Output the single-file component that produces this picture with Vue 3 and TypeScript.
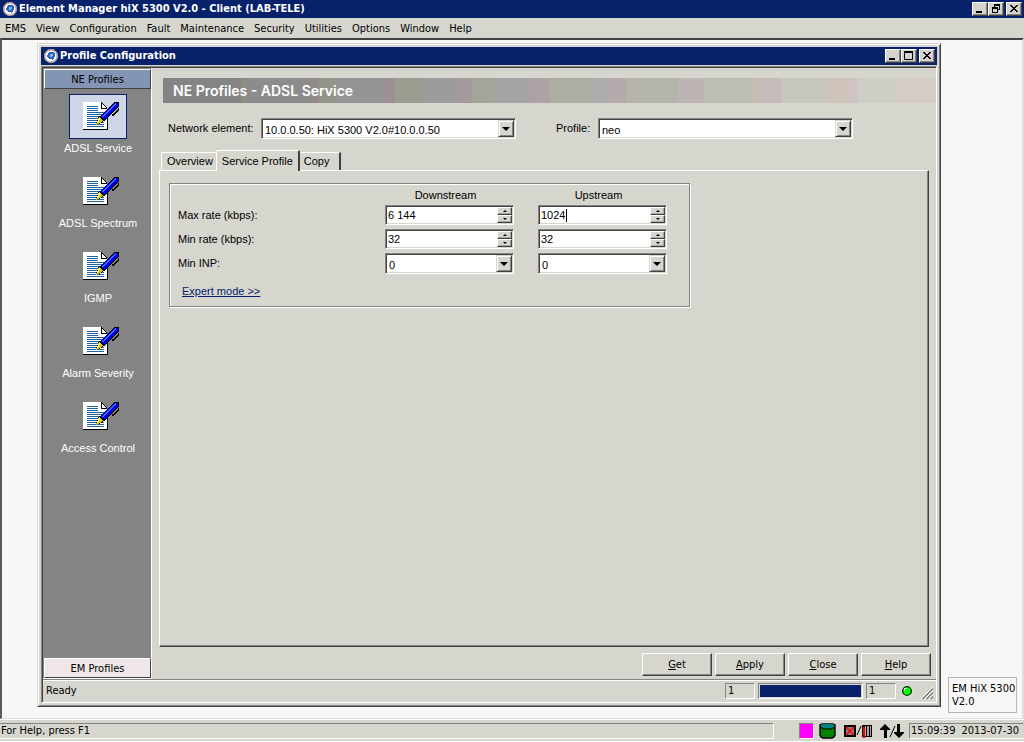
<script setup lang="ts">
import { ref } from 'vue'

interface StatusIndicator {
  low: string
  high: string
}

const menus: string[] = ['EMS', 'View', 'Configuration', 'Fault', 'Maintenance', 'Security', 'Utilities', 'Options', 'Window', 'Help']
const profiles: string[] = ['ADSL Service', 'ADSL Spectrum', 'IGMP', 'Alarm Severity', 'Access Control']
const tabs: string[] = ['Overview', 'Service Profile', 'Copy']
const actions: string[] = ['Get', 'Apply', 'Close', 'Help']
const docLines: number[] = [4, 6, 8, 10, 12, 14, 16, 18, 20, 22, 24]

const activeProfile = ref('ADSL Service')
const activeTab = ref('Service Profile')
const networkElement = ref('10.0.0.50: HiX 5300 V2.0#10.0.0.50')
const profile = ref('neo')
const maxDown = ref('6 144')
const maxUp = ref('1024')
const minDown = ref('32')
const minUp = ref('32')
const inpDown = ref('0')
const inpUp = ref('0')
const status: StatusIndicator = { low: '1', high: '1' }

function parse(text: string): number {
  return Number(text.replace(/\s/g, '')) || 0
}

function step(text: string, delta: number): string {
  return String(Math.max(0, parse(text) + delta))
}
</script>

<template>
  <div class="app">
    <header class="titlebar">
      <svg class="logo" viewBox="0 0 14 14" aria-hidden="true">
        <circle cx="7" cy="7" r="6.3" fill="#fff" stroke="#c69c84" stroke-width="1.4" />
        <circle cx="7" cy="7" r="6.3" fill="none" stroke="#9cadce" stroke-width="1.4" stroke-dasharray="2 3" />
        <path d="M5 3h5v1h1v4h-1v2h-1v1H8v-1H5V9H4V8H3V6h1V4h1z" fill="#2963bd" />
        <path d="M6 5h3v2H8v1H6z" fill="#8cb5ef" />
      </svg>
      <h1>Element Manager hiX 5300 V2.0 - Client (LAB-TELE)</h1>
      <div class="controls">
        <button type="button" aria-label="Minimize">
          <svg viewBox="0 0 12 10"><path d="M2 7h6v2H2z" /></svg>
        </button>
        <button type="button" aria-label="Restore">
          <svg viewBox="0 0 12 10"><path d="M4 0h6v6H8V5h1V2H5v1H4zM2 3h6v6H2zM3 5v3h4V5z" fill-rule="evenodd" /></svg>
        </button>
        <button type="button" class="close" aria-label="Close">
          <svg viewBox="0 0 12 10"><path d="M2 1h2v1h1v1h2V2h1V1h2v1H9v1H8v1H7v1h1v1h1v1h1v1H8V7H7V6H5v1H4v1H2V7h1V6h1V5h1V4H4V3H3V2H2z" /></svg>
        </button>
      </div>
    </header>

    <nav class="menubar">
      <button v-for="menu in menus" :key="menu" type="button">{{ menu }}</button>
    </nav>

    <main class="desktop">
      <section class="window">
        <header class="titlebar">
          <svg class="logo" viewBox="0 0 14 14" aria-hidden="true">
            <circle cx="7" cy="7" r="6.3" fill="#fff" stroke="#c69c84" stroke-width="1.4" />
            <circle cx="7" cy="7" r="6.3" fill="none" stroke="#9cadce" stroke-width="1.4" stroke-dasharray="2 3" />
            <path d="M5 3h5v1h1v4h-1v2h-1v1H8v-1H5V9H4V8H3V6h1V4h1z" fill="#2963bd" />
            <path d="M6 5h3v2H8v1H6z" fill="#8cb5ef" />
          </svg>
          <h2>Profile Configuration</h2>
          <div class="controls">
            <button type="button" aria-label="Minimize">
              <svg viewBox="0 0 12 10"><path d="M2 7h6v2H2z" /></svg>
            </button>
            <button type="button" aria-label="Maximize">
              <svg viewBox="0 0 12 10"><path d="M1 0h9v9H1zM2 2v6h7V2z" fill-rule="evenodd" /></svg>
            </button>
            <button type="button" class="close" aria-label="Close">
              <svg viewBox="0 0 12 10"><path d="M2 1h2v1h1v1h2V2h1V1h2v1H9v1H8v1H7v1h1v1h1v1h1v1H8V7H7V6H5v1H4v1H2V7h1V6h1V5h1V4H4V3H3V2H2z" /></svg>
            </button>
          </div>
        </header>

        <div class="client">
          <div class="body">
            <aside class="sidebar">
              <button type="button" class="group-head">NE Profiles</button>
              <div class="items">
                <button
                  v-for="item in profiles"
                  :key="item"
                  type="button"
                  class="item"
                  :class="{ active: item === activeProfile }"
                  @click="activeProfile = item"
                >
                  <span class="tile">
                    <svg viewBox="0 0 36 29" aria-hidden="true" shape-rendering="crispEdges">
                      <path d="M0 0h18l6 6v22H0z" fill="#fff" />
                      <path d="M0 28h25V14h-1v13H0z" fill="#000" />
                      <path d="M18 0h1v1h1v1h1v1h1v1h1v1h1v2h-6zM19 2v4h4V5h-1V4h-1V3h-1V2z" fill="#000" fill-rule="evenodd" />
                      <path v-for="y in docLines" :key="y" :d="y < 9 ? `M4 ${y}h11v1H4z` : `M4 ${y}h17v1H4z`" fill="#2163a5" />
                      <path d="M32 0h4v4L21 19l-5-4z" fill="#000" />
                      <path d="M32 1h3v3L21 18l-4-4z" fill="#0000de" />
                      <path d="M32 1h1v1L20 15h-1v-1z" fill="#426bff" />
                      <path d="M16 14l5 5-3 2-5 2v-2l2-4z" fill="#000" />
                      <path d="M16 15l4 3-3 3-4 2 1-3z" fill="#d6c610" />
                      <path d="M16 16h1v1l-2 4h-1v-1z" fill="#ffff9c" />
                      <path d="M35 6h1v2l-6 6h-1v-2z" fill="#000" />
                      <path d="M34 7h1l-5 5h-1z" fill="#948c00" />
                    </svg>
                  </span>
                  <span class="caption">{{ item }}</span>
                </button>
              </div>
              <button type="button" class="group-head bottom">EM Profiles</button>
            </aside>

            <div class="content">
              <h3 class="banner">NE Profiles - ADSL Service</h3>

              <div class="filters">
                <label class="wide-label" for="network-element">Network element:</label>
                <div class="field combo large">
                  <select id="network-element" v-model="networkElement">
                    <option>10.0.0.50: HiX 5300 V2.0#10.0.0.50</option>
                  </select>
                  <span class="arrow"></span>
                </div>
                <label class="short-label" for="profile">Profile:</label>
                <div class="field combo large">
                  <select id="profile" v-model="profile">
                    <option>neo</option>
                  </select>
                  <span class="arrow"></span>
                </div>
              </div>

              <div class="tabs" role="tablist">
                <button
                  v-for="tab in tabs"
                  :key="tab"
                  type="button"
                  role="tab"
                  :aria-selected="tab === activeTab"
                  :class="{ selected: tab === activeTab }"
                  @click="activeTab = tab"
                >{{ tab }}</button>
              </div>

              <div class="panel" role="tabpanel">
                <form class="rates" @submit.prevent>
                  <div class="grid">
                    <span></span>
                    <span class="column-head">Downstream</span>
                    <span class="column-head">Upstream</span>

                    <label for="max-down">Max rate (kbps):</label>
                    <div class="field spin">
                      <input id="max-down" v-model="maxDown" type="text" />
                      <span class="steps">
                        <button type="button" aria-label="Increase" @click="maxDown = step(maxDown, 32)"><i class="up"></i></button>
                        <button type="button" aria-label="Decrease" @click="maxDown = step(maxDown, -32)"><i class="down"></i></button>
                      </span>
                    </div>
                    <div class="field spin">
                      <input v-model="maxUp" type="text" aria-label="Max rate upstream" />
                      <span class="caret"></span>
                      <span class="steps">
                        <button type="button" aria-label="Increase" @click="maxUp = step(maxUp, 32)"><i class="up"></i></button>
                        <button type="button" aria-label="Decrease" @click="maxUp = step(maxUp, -32)"><i class="down"></i></button>
                      </span>
                    </div>

                    <label for="min-down">Min rate (kbps):</label>
                    <div class="field spin">
                      <input id="min-down" v-model="minDown" type="text" />
                      <span class="steps">
                        <button type="button" aria-label="Increase" @click="minDown = step(minDown, 32)"><i class="up"></i></button>
                        <button type="button" aria-label="Decrease" @click="minDown = step(minDown, -32)"><i class="down"></i></button>
                      </span>
                    </div>
                    <div class="field spin">
                      <input v-model="minUp" type="text" aria-label="Min rate upstream" />
                      <span class="steps">
                        <button type="button" aria-label="Increase" @click="minUp = step(minUp, 32)"><i class="up"></i></button>
                        <button type="button" aria-label="Decrease" @click="minUp = step(minUp, -32)"><i class="down"></i></button>
                      </span>
                    </div>

                    <label for="inp-down">Min INP:</label>
                    <div class="field combo">
                      <select id="inp-down" v-model="inpDown"><option>0</option></select>
                      <span class="arrow"></span>
                    </div>
                    <div class="field combo">
                      <select v-model="inpUp" aria-label="Min INP upstream"><option>0</option></select>
                      <span class="arrow"></span>
                    </div>
                  </div>
                  <a class="expert" href="#expert">Expert mode &gt;&gt;</a>
                </form>
              </div>

              <div class="actions">
                <button v-for="action in actions" :key="action" type="button"><u>{{ action[0] }}</u>{{ action.slice(1) }}</button>
              </div>
            </div>
          </div>

          <footer class="window-status">
            <span class="ready">Ready</span>
            <span class="cell">{{ status.low }}</span>
            <span class="progress"><span></span></span>
            <span class="cell">{{ status.high }}</span>
            <svg class="led" viewBox="0 0 12 12" aria-hidden="true">
              <circle cx="6" cy="6" r="5.5" fill="#fff" />
              <circle cx="6" cy="6" r="4.4" fill="#00ff00" stroke="#003100" stroke-width="1.4" />
              <path d="M3 3h3v1H4v2H3z" fill="#ceffce" />
            </svg>
            <svg class="grip" viewBox="0 0 12 12" aria-hidden="true">
              <path d="M0 12L12 0M4 12l8-8M8 12l4-4" stroke="#fff" stroke-width="1" />
              <path d="M1 12L12 1M2 12L12 2M5 12l7-7M6 12l6-6M9 12l3-3M10 12l2-2" stroke="#848484" stroke-width="1" />
            </svg>
          </footer>
        </div>
      </section>

      <div class="icon-note">EM HiX 5300<br />V2.0</div>
    </main>

    <footer class="statusbar">
      <span class="help">For Help, press F1</span>
      <span class="magenta"></span>
      <svg class="can" viewBox="0 0 17 16" aria-hidden="true">
        <path d="M3 1h11l2 1v10l-1 2-2 1H4l-2-1-1-2V2z" fill="#008400" stroke="#000" stroke-width="1.4" />
        <path d="M3 1h11l1 1v2l-2 1H4L2 4V2z" fill="#008484" />
        <path d="M2 4v1h2v1h9V5h2V4" fill="none" stroke="#000" />
      </svg>
      <svg class="alarm" viewBox="0 0 28 14" aria-hidden="true">
        <rect x="1" y="2" width="10" height="10" fill="#848484" stroke="#000" stroke-width="2" />
        <path d="M2 3l8 8M10 3l-8 8" stroke="#f00" stroke-width="1.5" />
        <path d="M13 11l4-9" stroke="#000" stroke-width="1" />
        <rect x="18" y="1" width="10" height="12" fill="#000" />
        <path d="M21 2h1v10h-1zM23 2h2v10h-2zM26 2h1v10h-1z" fill="#a5a5a5" />
        <path d="M19 3h2v11h-2z" fill="#f00" />
      </svg>
      <svg class="arrows" viewBox="0 0 24 14" aria-hidden="true">
        <path d="M5 0l5 5v1H7v8H4V6H0V5z" />
        <path d="M10 13L15 2" stroke="#000" stroke-width="1" />
        <path d="M17 0h3v8h4v1l-5 5-5-5V8h3z" />
      </svg>
      <span class="clock"><span>15:09:39</span><span>2013-07-30</span></span>
    </footer>
  </div>
</template>

<style>
html,
body {
  margin: 0;
  background: #d6d6ce;
}
</style>

<style scoped>
* {
  box-sizing: border-box;
}

.app {
  display: flex;
  flex-direction: column;
  height: 100vh;
  background: #d6d6ce;
  color: #000;
  font-family: "DejaVu Sans Condensed", "DejaVu Sans", sans-serif;
  font-size: 11px;
  line-height: 14px;
}

button,
input,
select {
  margin: 0;
  padding: 0;
  border: 0;
  border-radius: 0;
  outline: 0;
  background: transparent;
  color: inherit;
  font: inherit;
}

/* title bars */
.titlebar {
  display: flex;
  flex: none;
  align-items: center;
  height: 18px;
  padding: 0 2px 0 3px;
  background: #08216b;
  color: #fff;
}

.logo {
  width: 14px;
  height: 14px;
  margin-right: 2px;
}

.titlebar h1,
.titlebar h2 {
  flex: 1;
  margin: 0;
  font-size: 11px;
  font-weight: bold;
  line-height: 18px;
  white-space: nowrap;
}

.controls {
  display: flex;
}

.controls button {
  width: 16px;
  height: 14px;
  border: 1px solid;
  border-color: #fff #424142 #424142 #fff;
  background: #d6d3ce;
  box-shadow: inset -1px -1px 0 #848484;
}

.controls .close {
  margin-left: 2px;
}

.controls svg {
  display: block;
  width: 12px;
  height: 10px;
  margin: 1px;
}

/* menu */
.menubar {
  display: flex;
  flex: none;
  gap: 10px;
  height: 20px;
  padding: 1px 5px 0;
}

/* desktop */
.desktop {
  position: relative;
  flex: 1;
  min-height: 0;
  border-top: 2px solid #424142;
  border-left: 2px solid #5a5a5a;
  border-right: 2px solid #dedede;
  border-bottom: 1px solid #dedede;
  background: #f7f7f7;
}

.window {
  position: absolute;
  top: 3px;
  right: 81px;
  bottom: 11px;
  left: 35px;
  display: flex;
  flex-direction: column;
  padding: 3px;
  border: 1px solid;
  border-color: #d6d6ce #424142 #424142 #d6d6ce;
  background: #d6d6ce;
  box-shadow: inset 1px 1px 0 #fff, inset -1px -1px 0 #848484;
}

.client {
  display: flex;
  flex: 1;
  flex-direction: column;
  min-height: 0;
  margin-top: 1px;
  border: 1px solid;
  border-color: #848484 #fff #fff #848484;
  box-shadow: inset 1px 1px 0 #424142;
  padding: 1px 0 1px 1px;
}

.body {
  display: flex;
  flex: 1;
  min-height: 0;
}

.sidebar {
  display: flex;
  flex: none;
  flex-direction: column;
  width: 109px;
  padding: 1px 0 0 1px;
  border-right: 1px solid #fff;
  border-bottom: 1px solid #fff;
  background: #848484;
}

.group-head {
  flex: none;
  height: 20px;
  padding-top: 2px;
  border: 1px solid;
  border-color: #fff #424142 #424142 #fff;
  background: #8494b5;
}

.group-head.bottom {
  background: #efe7e7;
}

.items {
  display: flex;
  flex: 1;
  flex-direction: column;
  gap: 14px;
  padding: 5px 0 0 1px;
}

.item {
  display: flex;
  flex-direction: column;
  align-items: center;
  gap: 2px;
  color: #fff;
  font-family: "Liberation Sans", Arial, sans-serif;
}

.tile {
  width: 58px;
  height: 45px;
  padding: 7px 13px;
  border: 1px solid transparent;
}

.tile svg {
  display: block;
  width: 36px;
  height: 29px;
}

.active .tile {
  border-color: #08216b;
  background: #ced6e7;
}

.caption {
  line-height: 14px;
}

/* content */
.content {
  display: flex;
  flex: 1;
  flex-direction: column;
  min-width: 0;
  padding: 10px 0 3px 7px;
  font-family: "Liberation Sans", Arial, sans-serif;
}

.banner {
  height: 25px;
  margin: 0 0 15px 4px;
  padding-left: 10px;
  background: linear-gradient(
    90deg,
    #848484 74px, #8c8284 74px 78px, #8c8c84 78px 85px, #8c8c8c 85px 148px,
    #948a8c 148px 155px, #949489 155px 172px, #949494 172px 221px, #9c9094 221px 232px,
    #9c9c90 232px 258px, #9c9c9c 258px 295px, #a59a9c 295px 309px, #a4a498 309px 331px,
    #a5a5a5 331px 368px, #ada3a4 368px 386px, #adada3 386px 429px, #adadad 429px 442px,
    #b5abac 442px 464px, #b5b5ab 464px 515px, #bdb4b4 515px 541px, #bdbdb4 541px 589px,
    #c6bcb2 589px 601px, #c6bbbb 601px 618px, #c6c6bd 618px 662px, #cec4b9 662px 687px,
    #cec4c6 687px 695px, #cecec5 695px 736px, #d6ccc7 736px
  );
  color: #fff;
  font-family: Inter, "Liberation Sans", sans-serif;
  font-size: 14px;
  font-weight: 600;
  line-height: 25px;
}

.filters {
  display: flex;
  align-items: flex-start;
  margin-left: 9px;
  line-height: 20px;
}

.wide-label {
  width: 93px;
}

.short-label {
  width: 42px;
  margin-left: 40px;
}

.field {
  position: relative;
  display: flex;
  width: 129px;
  height: 20px;
  padding: 1px;
  border: 1px solid;
  border-color: #848484 #fff #fff #848484;
  background: #fff;
  box-shadow: inset 1px 1px 0 #424142, inset -1px -1px 0 #d6d6ce;
}

.combo {
  height: 21px;
}

.large {
  width: 255px;
}

.field select,
.field input {
  flex: 1;
  width: 0;
  appearance: none;
}

.field select {
  height: 15px;
  padding-left: 2px;
}

.field input {
  padding-left: 1px;
}

.arrow {
  display: flex;
  align-items: center;
  justify-content: center;
  width: 16px;
  border: 1px solid;
  border-color: #d6d6ce #424142 #424142 #d6d6ce;
  background: #d6d6ce;
  box-shadow: inset 1px 1px 0 #fff, inset -1px -1px 0 #848484;
  pointer-events: none;
}

.arrow::before {
  border: 4px solid transparent;
  border-top-color: #000;
  border-bottom: 0;
  content: "";
}

.steps {
  display: flex;
  flex-direction: column;
  width: 15px;
}

.steps button {
  display: flex;
  flex: 1;
  align-items: center;
  justify-content: center;
  border: 1px solid;
  border-color: #fff #424142 #424142 #fff;
  background: #d6d6ce;
  box-shadow: inset -1px -1px 0 #a5a5a5;
}

.up,
.down {
  border: 2px solid transparent;
}

.up {
  border-top: 0;
  border-bottom-color: #000;
}

.down {
  border-top-color: #000;
  border-bottom: 0;
}

.caret {
  position: absolute;
  top: 3px;
  left: 27px;
  width: 1px;
  height: 13px;
  background: #000;
}

/* tabs */
.tabs {
  display: flex;
  align-items: flex-end;
  height: 20px;
  margin: 11px 0 0 2px;
}

.tabs button {
  height: 18px;
  padding: 0 3px 2px 5px;
  border: 1px solid #fff;
  border-right: 0;
  border-bottom: 0;
  border-radius: 2px 0 0 0;
}

.tabs .selected {
  position: relative;
  height: 21px;
  margin-bottom: -1px;
  padding: 0 5px;
  border-right: 2px solid #424142;
  border-radius: 2px 2px 0 0;
  background: #d6d6ce;
}

.tabs button:last-child {
  padding: 0 10px 2px 4px;
  border-left: 0;
  border-right: 2px solid #424142;
}

.panel {
  flex: 1;
  min-height: 0;
  margin-right: 7px;
  padding: 12px 9px;
  border: 1px solid;
  border-color: #fff #424142 #424142 #fff;
  box-shadow: inset -1px -1px 0 #848484;
}

.rates {
  width: 521px;
  padding: 0 8px 8px;
  border: 1px solid #848484;
  box-shadow: inset 1px 1px 0 #fff, 1px 1px 0 #fff;
}

.grid {
  display: grid;
  grid-template-columns: 207px 153px 129px;
  grid-template-rows: 21px 24px 24px 24px;
  align-items: start;
  line-height: 20px;
}

.column-head {
  width: 121px;
  line-height: 22px;
  text-align: center;
}

.expert {
  display: inline-block;
  margin: 7px 0 0 4px;
  color: #08216b;
  line-height: 14px;
}

.actions {
  display: flex;
  justify-content: flex-end;
  gap: 3px;
  margin: 6px 5px 0 0;
  font-family: "DejaVu Sans Condensed", "DejaVu Sans", sans-serif;
}

.actions button {
  width: 70px;
  height: 23px;
  border: 1px solid;
  border-color: #fff #424142 #424142 #fff;
  box-shadow: inset -1px -1px 0 #848484;
}

/* status line of the window */
.window-status {
  display: flex;
  flex: none;
  gap: 3px;
  height: 22px;
  padding: 3px 3px 2px 0;
  border-top: 1px solid #848484;
  box-shadow: inset 0 1px 0 #fff;
  line-height: 16px;
}

.ready {
  flex: 1;
  padding-left: 3px;
}

.cell {
  width: 30px;
  padding-left: 2px;
  border: 1px solid;
  border-color: #848484 #fff #fff #848484;
  line-height: 14px;
}

.progress {
  width: 105px;
  padding: 1px;
  border: 1px solid;
  border-color: #848484 #fff #fff #848484;
}

.progress span {
  display: block;
  height: 100%;
  background: #08216b;
}

.led {
  width: 12px;
  height: 12px;
  margin: 2px 5px 0 2px;
}

.grip {
  align-self: flex-end;
  width: 12px;
  height: 12px;
}

.icon-note {
  position: absolute;
  right: 5px;
  bottom: 5px;
  width: 69px;
  height: 36px;
  padding: 4px 0 0 3px;
  border: 1px solid #b5b5b5;
  line-height: 13px;
  white-space: nowrap;
}

/* application status bar */
.statusbar {
  display: flex;
  flex: none;
  align-items: center;
  height: 23px;
  padding: 2px 0 1px;
  border-top: 1px solid #fff;
  border-bottom: 1px solid #fff;
}

.help {
  flex: 1;
  height: 16px;
  margin-right: 25px;
  padding-left: 1px;
  border-top: 1px solid #848484;
  border-right: 1px solid #fff;
  border-bottom: 1px solid #fff;
}

.magenta {
  width: 15px;
  height: 16px;
  border: 1px solid;
  border-color: #848484 #fff #fff #848484;
  background: #ff00ff;
}

.can {
  width: 17px;
  height: 16px;
  margin-left: 5px;
}

.alarm {
  width: 28px;
  height: 14px;
  margin-left: 8px;
}

.arrows {
  width: 24px;
  height: 14px;
  margin-left: 8px;
}

.clock {
  display: flex;
  justify-content: space-between;
  width: 115px;
  height: 16px;
  margin-left: 5px;
  padding: 0 4px 0 1px;
  border: 1px solid;
  border-color: #848484 #d6d6ce #fff #848484;
}
</style>
